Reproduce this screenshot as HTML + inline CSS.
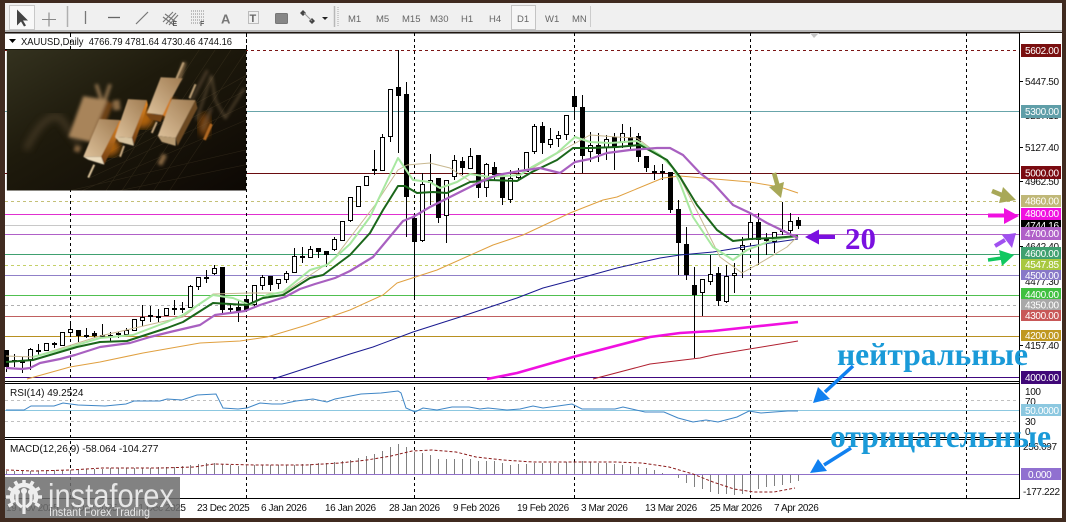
<!DOCTYPE html>
<html>
<head>
<meta charset="utf-8">
<style>
html,body{margin:0;padding:0;width:1066px;height:522px;overflow:hidden;background:#402b20}
svg.root{display:block;filter:blur(.3px)}
text{font-family:"Liberation Sans","DejaVu Sans",sans-serif}
.ax{font-size:10px;fill:#111;letter-spacing:-.35px}
.lb{font-size:10px;fill:#fff;letter-spacing:-.35px}
.dt{font-size:10px;fill:#111;letter-spacing:-.4px}
.tb{font-size:9.5px;fill:#666}
.ru{font-family:"Liberation Serif","DejaVu Serif",serif;font-weight:bold}
</style>
</head>
<body>
<svg class="root" xmlns="http://www.w3.org/2000/svg" width="1066" height="522" viewBox="0 0 1066 522">
<defs>
<linearGradient id="ib" x1="0" y1="0" x2="1" y2="1"><stop offset="0" stop-color="#34321f"/><stop offset=".4" stop-color="#1e1a0c"/><stop offset="1" stop-color="#0d0804"/></linearGradient>
<linearGradient id="g1" x1="0" y1="1" x2="1" y2="0"><stop offset="0" stop-color="#dcc09a"/><stop offset="1" stop-color="#a07c52"/></linearGradient>
<linearGradient id="g2" x1="0" y1="0" x2="0" y2="1"><stop offset="0" stop-color="#e88c24"/><stop offset="1" stop-color="#6a3a10"/></linearGradient>
<filter id="b1"><feGaussianBlur stdDeviation="1.6"/></filter>
<filter id="b2"><feGaussianBlur stdDeviation=".5"/></filter>
<filter id="b3"><feGaussianBlur stdDeviation="3.5"/></filter>
</defs>

<!-- frame -->
<rect width="1066" height="522" fill="#402b20"/>
<rect x="5" y="3" width="1057" height="28" fill="#f0f0f0"/>
<rect x="5" y="30" width="1057" height="2" fill="#b4b4b4"/>
<rect x="5" y="33" width="1057" height="485" fill="#fff"/>
<rect x="5" y="32.5" width="1057" height="1" fill="#000"/>

<!-- toolbar -->
<rect x="9.500" y="5.500" width="25" height="24" fill="#f8f8f8" stroke="#c8c8c8"/>
<path d="M17 9.500v16l4-4 3 5 2-1-3-5h5z" fill="#444"/>
<path d="M42 19.500h14M49 12.500v14" stroke="#888" stroke-width="1.100" fill="none"/>
<path d="M67.500 6v21" stroke="#b0b0b0" stroke-width="1.500"/>
<path d="M85.500 11v13" stroke="#777" stroke-width="1.300"/>
<path d="M108 17.500h12" stroke="#666" stroke-width="1.300"/>
<path d="M136 24l12-12" stroke="#777" stroke-width="1.200"/>
<path d="M163 22l10-10M166 24l10-11M169 25l9-10M163 17l11 8M165 14l11 8" stroke="#777" stroke-width="1.100" fill="none"/>
<text x="172.500" y="26" font-size="7" font-weight="bold" fill="#555">E</text>
<path d="M191 11h14M191 14h14M191 17h14M191 20h14M191 23h9" stroke="#888" stroke-width="1" stroke-dasharray="1 1" fill="none"/>
<text x="200" y="26" font-size="7" font-weight="bold" fill="#555">F</text>
<text x="221" y="23.500" font-size="13" font-weight="bold" fill="#777">A</text>
<rect x="248.500" y="11.500" width="10" height="12" fill="none" stroke="#888" stroke-dasharray="1 1"/>
<text x="249.500" y="22" font-size="11" font-weight="bold" fill="#666">T</text>
<rect x="275.500" y="13.500" width="12" height="10" rx="1" fill="#868686" stroke="#777"/>
<path d="M303 10l3 3-3 3-3-3zM312 18l3 3-3 3-3-3z" fill="#444"/><path d="M304 13l8 8" stroke="#999"/>
<path d="M322 17h6l-3 3z" fill="#222"/>
<path d="M334.500 6v21" stroke="#b8b8b8" stroke-width="1.500"/><path d="M338 7v20" stroke="#aaa" stroke-dasharray="1 1"/>
<rect x="511.500" y="5.500" width="24" height="24" fill="#f6f6f6" stroke="#c4c4c4"/>
<text class="tb" x="348" y="22">M1</text><text class="tb" x="376" y="22">M5</text><text class="tb" x="402" y="22">M15</text><text class="tb" x="430" y="22">M30</text><text class="tb" x="461" y="22">H1</text><text class="tb" x="489" y="22">H4</text><text class="tb" x="517" y="22">D1</text><text class="tb" x="545" y="22">W1</text><text class="tb" x="572" y="22">MN</text>
<path d="M590.500 6v21" stroke="#ccc"/>

<!-- horizontal levels -->
<g fill="none" stroke-width="1">
<path d="M5 50.500H1020" stroke="#7a1414" stroke-dasharray="3 3"/>
<path d="M5 111.500H1020" stroke="#68a4aa"/>
<path d="M5 173.500H1020" stroke="#6a0c10"/>
<path d="M5 201.500H1020" stroke="#c4c078" stroke-dasharray="3 3"/>
<path d="M5 214.500H1020" stroke="#e030d0"/>
<path d="M5 225.500H1020" stroke="#c8c8c8"/>
<path d="M5 234.500H1020" stroke="#b060c8"/>
<path d="M5 254.500H1020" stroke="#40a070"/>
<path d="M5 265.500H1020" stroke="#c4d068" stroke-dasharray="3 3"/>
<path d="M5 275.500H1020" stroke="#9080c8"/>
<path d="M5 295.500H1020" stroke="#50c050"/>
<path d="M5 305.500H1020" stroke="#b0b0b0" stroke-dasharray="3 3"/>
<path d="M5 316.500H1020" stroke="#c06060"/>
<path d="M5 336.500H1020" stroke="#b89020"/>
<path d="M5 377.500H1020" stroke="#400880"/>
</g>
<!-- vertical grid -->
<path d="M70.500 33V498M246.500 33V498M414.500 33V498M574.500 33V498M750.500 33V498M966.500 33V498" stroke="#000" stroke-dasharray="3 3"/>

<!-- candle wicks -->
<path stroke="#000" stroke-width="1" fill="none" d="M6.500 350V372M14.500 354V367M22.500 357V373M30.500 348V370M38.500 344V356M54.500 342V348M62.500 332V346M70.500 321V337M78.500 330V342M86.500 328V338M94.500 331V338M102.500 324V338M110.500 332V342M118.500 332V338M126.500 328V336M134.500 319V331M142.500 305V326M150.500 306V322M158.500 309V322M166.500 308V316M174.500 300V315M182.500 302V313M190.500 285V308M198.500 277V290M206.500 270V283M214.500 265V275M222.500 267V313M230.500 303V313M238.500 300V322M246.500 295V312M254.500 285V307M262.500 275V290M270.500 276V291M278.500 279V289M286.500 271V283M294.500 248V273M302.500 247V263M310.500 246V258M318.500 248V258M326.500 251V267M334.500 237V251M342.500 221V241M350.500 197V222M358.500 186V207M366.500 176V186M374.500 150V175M382.500 134V171M390.500 89V142M398.500 50V153M406.500 82V237M414.500 215V300M422.500 173V242M430.500 154V205M438.500 178V223M446.500 180V243M454.500 155V180M462.500 157V175M470.500 148V169M478.500 155V198M486.500 163V197M494.500 162V180M502.500 175V205M510.500 170V203M518.500 168V180M526.500 152V172M534.500 124V154M542.500 122V154M550.500 128V148M558.500 131V147M566.500 115V140M574.500 87V120M582.500 95V173M590.500 132V162M598.500 133V162M606.500 135V160M614.500 133V170M622.500 124V148M630.500 127V150M638.500 133V162M646.500 156V172M654.500 165V180M662.500 164V180M670.500 172V213M678.500 200V275M686.500 227V280M694.500 267V358M702.500 279V316M710.500 255V285M718.500 267V306M726.500 265V303M734.500 263V293M742.500 237V278M750.500 215V240M758.500 213V265M766.500 233V255M774.500 232V253M782.500 202V235M790.500 213V238M798.500 217V229"/>
<!-- black bodies -->
<path stroke="#000" stroke-width="5" fill="none" d="M6.500 350V367M14.500 360V362M22.500 361V363M38.500 350V352M54.500 343V345M78.500 330V336M86.500 335V337M94.500 333V336M102.500 335V337M110.500 335V337M118.500 333V335M150.500 315V317M158.500 316V318M174.500 308V310M182.500 308V310M206.500 277V279M222.500 267V310M230.500 308V310M238.500 307V312M246.500 299V310M270.500 276V285M302.500 256V258M318.500 248V252M326.500 251V255M374.500 169V171M398.500 87V96M406.500 94V197M414.500 218V242M438.500 178V218M462.500 161V168M478.500 155V188M494.500 167V175M502.500 175V198M542.500 126V143M574.500 96V107M582.500 107V156M598.500 145V154M614.500 137V148M630.500 137V145M638.500 136V157M646.500 156V168M654.500 171V173M662.500 171V173M670.500 172V210M678.500 209V243M686.500 244V275M694.500 285V295M718.500 273V301M758.500 222V240M766.500 239V241M782.500 230V232M798.500 220V226"/>
<!-- white bodies -->
<path stroke="#000" stroke-width="1" fill="#fff" d="M28.500 349.500h4v10h-4zM44.500 343.500h4v7h-4zM60.500 332.500h4v13h-4zM68.500 329.500h4v3h-4zM124.500 330.500h4v4h-4zM132.500 319.500h4v11h-4zM140.500 317.500h4v3h-4zM164.500 308.500h4v7h-4zM188.500 286.500h4v21h-4zM196.500 277.500h4v9h-4zM212.500 268.500h4v5h-4zM252.500 285.500h4v19h-4zM260.500 277.500h4v8h-4zM276.500 279.500h4v4h-4zM284.500 273.500h4v6h-4zM292.500 256.500h4v16h-4zM308.500 249.500h4v8h-4zM332.500 239.500h4v10h-4zM340.500 221.500h4v19h-4zM348.500 197.500h4v23h-4zM356.500 186.500h4v20h-4zM364.500 176.500h4v9h-4zM380.500 137.500h4v33h-4zM388.500 89.500h4v47h-4zM420.500 184.500h4v56h-4zM428.500 180.500h4v2h-4zM444.500 180.500h4v35h-4zM452.500 160.500h4v16h-4zM468.500 156.500h4v12h-4zM484.500 164.500h4v23h-4zM508.500 178.500h4v21h-4zM516.500 174.500h4v3h-4zM524.500 152.500h4v19h-4zM532.500 126.500h4v25h-4zM548.500 139.500h4v5h-4zM556.500 135.500h4v3h-4zM564.500 115.500h4v19h-4zM588.500 145.500h4v6h-4zM604.500 139.500h4v8h-4zM620.500 133.500h4v9h-4zM700.500 279.500h4v13h-4zM708.500 274.500h4v7h-4zM724.500 276.500h4v25h-4zM732.500 273.500h4v2h-4zM740.500 245.500h4v4h-4zM748.500 222.500h4v17h-4zM772.500 232.500h4v9h-4zM788.500 221.500h4v9h-4z"/>

<!-- moving averages -->
<g fill="none" stroke-linejoin="round">
<polyline stroke="#e0a040" stroke-width="1" points="27,379 70,367 100,362 143,353 200,343 240,341 267,337 307,325 350,310 383,295 397,283 437,270 493,245 523,235 570,213 603,200 617,197 663,178 680,176 750,182 780,187 798,193"/>
<polyline stroke="#1a1a90" stroke-width="1" points="273,379 350,354 373,347 413,332 460,317 517,298 543,288 577,279 617,268 660,258 680,255 713,252 750,246 798,239"/>
<polyline stroke="#f010e0" stroke-width="2.600" points="487,379 517,373 573,357 650,337 680,333 713,331 798,322"/>
<polyline stroke="#b02030" stroke-width="1" points="593,379 650,364 700,358 713,355 798,341"/>
<polyline stroke="#c8b890" stroke-width="1" points="6,356 33,357 100,336 183,317 213,294 250,293 283,293 333,260 375,205 398,170 407,165 430,163 450,168 473,183 490,177 533,168 563,150 590,135 617,137 637,138 670,163 680,178 700,217 720,257 742,273 760,263 787,247 797,237"/>
<polyline stroke="#a8e8a0" stroke-width="2" points="33,357 67,348 100,338 133,335 167,322 183,315 213,295 233,298 250,305 267,295 283,292 310,270 327,265 350,244 370,217 398,158 413,180 430,182 440,188 457,182 470,174 490,177 520,175 532,167 557,153 575,137 590,142 610,143 637,141 660,155 673,168 680,183 693,217 713,247 733,260 747,250 773,240 798,236"/>
<polyline stroke="#1a661a" stroke-width="2" points="6,362 33,360 77,347 100,342 127,341 167,328 183,322 213,303 230,304 247,305 263,298 283,295 310,278 323,275 350,255 370,233 383,210 398,186 405,186 417,193 433,192 447,193 470,182 490,180 517,181 532,172 557,160 573,148 590,148 617,147 640,145 667,160 680,177 697,205 717,230 733,241 750,239 773,238 798,236"/>
<polyline stroke="#a860c0" stroke-width="2.200" points="6,368 22,369 30,368 40,363 60,359 75,355 100,347 130,343 150,337 170,332 200,325 215,315 245,311 260,305 285,297 300,289 315,284 335,278 350,271 373,257 393,233 403,221 413,217 430,207 450,197 478,183 497,175 520,171 540,168 560,173 575,162 590,159 607,153 630,150 657,148 670,148 683,155 700,173 713,183 733,205 750,213 767,223 798,238"/>
</g>

<!-- separators between panes -->
<rect x="5" y="381" width="1015" height="1" fill="#000"/>
<rect x="5" y="383" width="1015" height="1" fill="#000"/>
<rect x="5" y="437" width="1015" height="1" fill="#000"/>
<rect x="5" y="439" width="1015" height="1" fill="#000"/>
<rect x="5" y="498" width="1015" height="1" fill="#000"/>
<path d="M5 382.500H1020M5 438.500H1020" stroke="#fff"/>

<!-- RSI -->
<path d="M5 400.500H1020M5 421.500H1020" stroke="#c0c0c0" stroke-dasharray="3 3"/>
<path d="M5 410.500H1020" stroke="#8cc8e0"/>
<polyline fill="none" stroke="#3f86c6" stroke-width="1" points="6,410 24,410 31,406 54,406 63,403 78,405 105,406 126,404 134,401 160,401 167,399 182,400 197,395 216,394 223,408 238,409 247,408 260,403 272,404 282,404 296,401 313,399 327,402 335,399 361,394 381,393 398,391 401,393 406,408 415,412 423,408 437,410 452,407 469,407 480,409 488,408 507,410 520,409 533,406 543,408 558,406 572,404 582,409 615,409 623,407 645,412 664,412 678,418 693,422 706,420 718,422 737,417 749,411 761,413 774,412 788,411 798,411"/>

<!-- MACD histogram -->
<path stroke="#808080" stroke-width="1" fill="none" d="M6.500 474V471M14.500 474V471M22.500 474V471M30.500 474V471M38.500 474V471M46.500 474V471M54.500 474V470M62.500 474V470M70.500 474V470M78.500 474V470M86.500 474V469M94.500 474V469M102.500 474V469M110.500 474V468M118.500 474V468M126.500 474V468M134.500 474V468M142.500 474V468M150.500 474V468M158.500 474V467M166.500 474V467M174.500 474V467M182.500 474V466M190.500 474V465M198.500 474V464M206.500 474V463M214.500 474V463M222.500 474V464M230.500 474V465M238.500 474V466M246.500 474V465M254.500 474V465M262.500 474V465M270.500 474V465M278.500 474V465M286.500 474V465M294.500 474V465M302.500 474V464M310.500 474V464M318.500 474V463M326.500 474V463M334.500 474V462M342.500 474V461M350.500 474V460M358.500 474V458M366.500 474V456M374.500 474V454M382.500 474V451M390.500 474V447M398.500 474V444M406.500 474V447M414.500 474V452M422.500 474V453M430.500 474V455M438.500 474V459M446.500 474V459M454.500 474V459M462.500 474V459M470.500 474V459M478.500 474V461M486.500 474V461M494.500 474V461M502.500 474V463M510.500 474V465M518.500 474V464M526.500 474V464M534.500 474V463M542.500 474V463M550.500 474V463M558.500 474V463M566.500 474V462M574.500 474V462M582.500 474V461M590.500 474V462M598.500 474V463M606.500 474V463M614.500 474V464M622.500 474V465M630.500 474V466M638.500 474V467M646.500 474V468M654.500 474V470M662.500 474V473M678.500 474V478M686.500 474V483M694.500 474V487M702.500 474V489M710.500 474V492M718.500 474V494M726.500 474V494M734.500 474V495M742.500 474V494M750.500 474V493M758.500 474V489M766.500 474V487M774.500 474V486M782.500 474V485M790.500 474V483M798.500 474V481"/>
<path d="M5 474.500H1020" stroke="#9070c8" stroke-width="1"/>
<polyline fill="none" stroke="#8b1a1a" stroke-width="1" stroke-dasharray="3 2" points="6,470 34,471 70,470 102,468 160,468 194,467 214,464 255,465 306,465 340,463 367,460 391,456 412,451 432,450 456,452 476,457 503,460 533,462 574,462 615,462 642,463 669,467 693,474 713,482 734,489 754,492 774,492 795,488"/>

<!-- axes -->
<rect x="1020" y="33" width="42" height="485" fill="#fff"/>
<path d="M1019.500 33V498" stroke="#000"/>
<path d="M1020 81.500h3M1020 147.500h3M1020 181.500h3M1020 246.500h3M1020 345.500h3" stroke="#000"/>
<text class="ax" x="1025" y="85">5447.50</text>
<text class="ax" x="1025" y="119">5287.15</text>
<text class="ax" x="1025" y="151">5127.40</text>
<text class="ax" x="1025" y="185">4962.50</text>
<text class="ax" x="1025" y="250">4642.40</text>
<text class="ax" x="1025" y="285">4477.30</text>
<text class="ax" x="1025" y="349">4157.40</text>
<text class="ax" x="1025" y="395">100</text>
<text class="ax" x="1025" y="405">70</text>
<text class="ax" x="1025" y="425">30</text>
<text class="ax" x="1025" y="435">0</text>
<text class="ax" x="1023" y="450">256.097</text>
<text class="ax" x="1023" y="495">-177.222</text>
<g>
<rect x="1021" y="44" width="40" height="13" fill="#7a1010"/><text class="lb" x="1025" y="54">5602.00</text>
<rect x="1021" y="105" width="40" height="13" fill="#5f9ea8"/><text class="lb" x="1025" y="115">5300.00</text>
<rect x="1021" y="166" width="40" height="13" fill="#7a0a10"/><text class="lb" x="1025" y="176.500">5000.00</text>
<rect x="1021" y="195" width="40" height="12" fill="#c0b878"/><text class="lb" x="1025" y="204.500">4860.00</text>
<rect x="1021" y="208" width="40" height="12" fill="#f010e0"/><text class="lb" x="1025" y="217">4800.00</text>
<rect x="1021" y="220" width="40" height="9" fill="#000"/><text class="lb" x="1025" y="229">4744.16</text>
<rect x="1021" y="227" width="40" height="13" fill="#b060c8"/><text class="lb" x="1025" y="237">4700.00</text>
<rect x="1021" y="247" width="40" height="12" fill="#40a070"/><text class="lb" x="1025" y="257">4600.00</text>
<rect x="1021" y="259" width="40" height="11" fill="#a8c840"/><text class="lb" x="1025" y="268">4547.85</text>
<rect x="1021" y="270" width="40" height="10" fill="#8878c8"/><text class="lb" x="1025" y="279">4500.00</text>
<rect x="1021" y="288" width="40" height="12" fill="#40c040"/><text class="lb" x="1025" y="298">4400.00</text>
<rect x="1021" y="299" width="40" height="12" fill="#a8a8a8"/><text class="lb" x="1025" y="308.500">4350.00</text>
<rect x="1021" y="310" width="40" height="11" fill="#c85858"/><text class="lb" x="1025" y="319">4300.00</text>
<rect x="1021" y="330" width="40" height="11" fill="#c09820"/><text class="lb" x="1025" y="339">4200.00</text>
<rect x="1021" y="371" width="40" height="13" fill="#400878"/><text class="lb" x="1025" y="381">4000.00</text>
<rect x="1021" y="404" width="40" height="12" fill="#8cc8e0"/><text class="lb" x="1025" y="414">50.0000</text>
<rect x="1021" y="468" width="40" height="12" fill="#9070d0"/><text class="lb" x="1028" y="478">0.000</text>
</g>
<path d="M810 33l4 5 5-5z" fill="#c4c4c4"/>

<!-- panel labels -->
<rect x="5" y="34" width="241" height="15" fill="#fff"/>
<path d="M70.500 34V49M246.500 34V49" stroke="#000" stroke-dasharray="3 3"/>
<path d="M9 39h7l-3.500 4z" fill="#000"/>
<text x="21" y="45" font-size="10" fill="#111" textLength="211" lengthAdjust="spacingAndGlyphs" xml:space="preserve">XAUUSD,Daily  4766.79 4781.64 4730.46 4744.16</text>
<text x="10" y="396" font-size="10" fill="#111">RSI(14) 49.2524</text>
<text x="10" y="452" font-size="10" fill="#111">MACD(12,26,9) -58.064 -104.277</text>

<!-- dates -->
<text class="dt" x="6" y="511">19 Nov 2025</text><text class="dt" x="70" y="511">1 Dec 2025</text><text class="dt" x="134" y="511">11 Dec 2025</text><text class="dt" x="197" y="511">23 Dec 2025</text><text class="dt" x="261" y="511">6 Jan 2026</text><text class="dt" x="325" y="511">16 Jan 2026</text><text class="dt" x="389" y="511">28 Jan 2026</text><text class="dt" x="453" y="511">9 Feb 2026</text><text class="dt" x="517" y="511">19 Feb 2026</text><text class="dt" x="581" y="511">3 Mar 2026</text><text class="dt" x="645" y="511">13 Mar 2026</text><text class="dt" x="710" y="511">25 Mar 2026</text><text class="dt" x="774" y="511">7 Apr 2026</text>

<!-- picture -->
<rect x="5" y="49" width="242" height="1" fill="#000"/>
<svg x="6" y="49.500" width="241" height="141" viewBox="6 49 241 142">
<rect x="6" y="49" width="241" height="142" fill="url(#ib)"/>
<path d="M100 200L200 49M116 200L216 49M132 200L232 49M148 200L248 49M164 200L264 49M82 191L247 120M90 178L247 105M100 165L247 90M110 152L247 75M70 191L247 150M120 191L247 165" stroke="#6a5a3c" stroke-width=".6" opacity=".26"/>
<path d="M25 150Q45 110 60 118L72 135 80 145" stroke="#5a4a30" stroke-width="6" fill="none" filter="url(#b3)" opacity=".6"/>
<ellipse cx="108" cy="147" rx="12" ry="9" fill="#e07a10" filter="url(#b3)" opacity=".75"/>
<ellipse cx="143" cy="118" rx="11" ry="10" fill="#e07a10" filter="url(#b3)" opacity=".75"/>
<ellipse cx="168" cy="108" rx="9" ry="10" fill="#d87010" filter="url(#b3)" opacity=".7"/>
<ellipse cx="205" cy="125" rx="6" ry="12" fill="#b86010" filter="url(#b3)" opacity=".6"/>
<g filter="url(#b1)">
<path d="M96 84L103 105 110 84M185 62L179 80" stroke="#a8845a" stroke-width="3.500" fill="none" opacity=".8"/>
<path d="M68 137L83 96 107 100 90 142z" fill="#a8845a"/>
<path d="M90 142L107 100 113 104 95 150z" fill="#6e4218"/>
<path d="M78 146L76 152" stroke="#80603e" stroke-width="6"/>
<path d="M165 155L160 165" stroke="#8a6a44" stroke-width="5"/>
<path d="M203 130L212 108M208 70L192 100" stroke="#6b5640" stroke-width="2.500" fill="none" opacity=".7"/>
<path d="M197 120L212 75 216 100 226 118 245 88" stroke="#8a7252" stroke-width="1.600" fill="none" opacity=".7"/>
<path d="M117 110L116 100" stroke="#8a6a44" stroke-width="7"/>
</g>
<g filter="url(#b2)">
<path d="M83 157L99 119 120 120 101 157z" fill="url(#g1)"/>
<path d="M101 157L120 120 123 125 104 165z" fill="url(#g2)"/>
<path d="M83 157L101 157 104 165 88 160z" fill="#eadabc"/>
<path d="M88 178L94 165" stroke="#dbc49c" stroke-width="2"/>
<path d="M115 137L128 99 147 100 132 138z" fill="url(#g1)"/>
<path d="M132 138L147 100 148 105 134 145z" fill="url(#g2)"/>
<path d="M115 137L132 138 134 146 119 142z" fill="#d8c4a0"/>
<path d="M120 157L124 146" stroke="#c6a880" stroke-width="2"/>
<path d="M147 113L161 77 183 78 163 115z" fill="url(#g1)"/>
<path d="M146 114L163 115 161 122 150 119z" fill="#7a4716"/>
<path d="M163 115L172 96 168 118z" fill="#d07a20"/>
<path d="M152 133L157 122" stroke="#c6a880" stroke-width="2"/>
<path d="M158 136L172 99 196 100 176 138z" fill="url(#g1)"/>
<path d="M176 138L196 100 198 108 178 146z" fill="#6c4a24"/>
<path d="M158 136L176 138 176 146 162 142z" fill="#b69a72"/>
<path d="M190 98L196 84M184 62L177 78" stroke="#b69a72" stroke-width="2.200" fill="none"/>
<path d="M205 140L212 124" stroke="#b06820" stroke-width="3"/>
</g>
</svg>

<!-- annotations -->
<g>
<path d="M835 237H816" stroke="#7a10e0" stroke-width="4"/><path d="M805 237L819 229.500V244.500z" fill="#7a10e0"/>
<path d="M774 173L778 187" stroke="#a8a858" stroke-width="4.500"/><path d="M781 198L769 187 784 182z" fill="#a8a858"/>
<path d="M992 191L1004 196" stroke="#a8a858" stroke-width="4.500"/><path d="M1016 200L1003 187 999 203z" fill="#a8a858"/>
<path d="M988 215.500H1006" stroke="#f010e0" stroke-width="4"/><path d="M1019 216L1004 208V224z" fill="#f010e0"/>
<path d="M995 246L1005 240" stroke="#a050f0" stroke-width="4"/><path d="M1016 233L1002 235 1012 248z" fill="#a050f0"/>
<path d="M988 260L1002 258" stroke="#10c860" stroke-width="3.500"/><path d="M1014 255L999 250 1002 266z" fill="#10c860"/>
<path d="M853 366L825 392" stroke="#1080f0" stroke-width="3.500"/><path d="M813 403L818 387 830 399z" fill="#1080f0"/>
<path d="M851 448L824 465" stroke="#1080f0" stroke-width="3.500"/><path d="M810 473L818 459 827 471z" fill="#1080f0"/>
</g>
<text class="ru" x="845" y="249" font-size="31" fill="#7a10e0">20</text>
<text class="ru" x="837" y="365" font-size="32" fill="#1a9ad8" textLength="191" lengthAdjust="spacingAndGlyphs">нейтральные</text>
<text class="ru" x="830" y="447" font-size="32" fill="#1a9ad8" textLength="221" lengthAdjust="spacingAndGlyphs">отрицательные</text>

<!-- instaforex logo -->
<rect x="5" y="477" width="175" height="41" fill="#6e6e6e" opacity=".86"/>
<g fill="none" stroke="#eee">
<circle cx="24" cy="497" r="12" stroke-width="4.500" stroke-dasharray="50.300 25.100" stroke-dashoffset="-31.400"/>
<path stroke-width="3.500" d="M24 485V480M30.500 485.700L33 481.400M35.300 490.500L39.600 488M37 497H42M35.300 503.500L39.600 506M17.500 485.700L15 481.400M12.700 490.500L8.400 488M11 497H6M12.700 503.500L8.400 506"/>
<path d="M24 493V514M17 492v9q0 3 5 6M31 492v9q0 3-5 6" stroke-width="3.200"/>
</g>
<circle cx="17" cy="492" r="3" fill="#eee"/><circle cx="24" cy="491" r="3" fill="#eee"/><circle cx="31" cy="492" r="3" fill="#eee"/>
<text x="48" y="507" font-size="33" fill="#e6e6e6" textLength="126" lengthAdjust="spacingAndGlyphs">instaforex</text>
<text x="49" y="516" font-size="12" fill="#e8e8e8" textLength="101" lengthAdjust="spacingAndGlyphs">Instant Forex Trading</text>
</svg>
</body>
</html>
